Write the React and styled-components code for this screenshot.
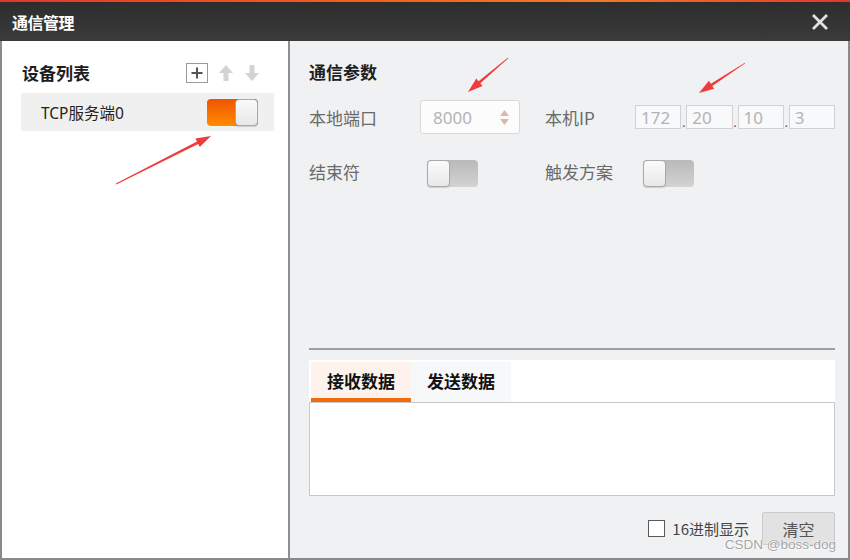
import React from "react";
import styled, { createGlobalStyle } from "styled-components";

const Global = createGlobalStyle`
  html, body { margin: 0; padding: 0; background: #fff; }
  body { font-family: "Noto Sans", "Noto Sans CJK SC", sans-serif; }
  * { box-sizing: border-box; }
`;

const Window = styled.div`
  position: relative;
  width: 850px;
  height: 560px;
  display: flex;
  flex-direction: column;
  background: #fff;
  overflow: hidden;
`;

const TitleBar = styled.div`
  height: 41px;
  flex-shrink: 0;
  display: flex;
  align-items: center;
  justify-content: space-between;
  padding: 2px 22px 0 12px;
  background:
    linear-gradient(90deg, #e2372c, #f2621c 45%, #f07a2a 70%, #e2372c) top / 100% 2px no-repeat,
    linear-gradient(#2c2c2c, #3b3b3b);
`;

const Title = styled.div`
  color: #fff;
  font-family: "Noto Sans CJK SC", sans-serif;
  font-weight: 700;
  font-size: 16px;
  letter-spacing: -0.5px;
`;

const CloseBtn = styled.svg`
  width: 16px;
  height: 16px;
  display: block;
`;

const Body = styled.div`
  flex: 1;
  min-height: 0;
  display: flex;
  border: 2px solid #8a8a8a;
  border-top: none;
`;

const LeftPanel = styled.div`
  width: 288px;
  flex-shrink: 0;
  background: #fff;
  border-right: 2px solid #8f8f8f;
  padding: 19px 14px 0 19px;
`;

const PanelHeader = styled.div`
  height: 26px;
  display: flex;
  align-items: center;
  justify-content: space-between;
  padding: 0 14px 0 1px;
`;

const SectionTitle = styled.div`
  font-family: "Noto Sans CJK SC", sans-serif;
  font-weight: 700;
  font-size: 17px;
  color: #1e1e1e;
  line-height: 24px;
  height: 24px;
`;

const HeaderIcons = styled.div`
  display: flex;
  align-items: center;
  gap: 10px;
`;

const IconSvg = styled.svg`
  display: block;
`;

const DeviceRow = styled.div`
  margin-top: 7px;
  height: 38px;
  background: #f0f0f0;
  display: flex;
  align-items: center;
  justify-content: space-between;
  padding: 0 16px 0 20px;
`;

const DeviceName = styled.span`
  font-size: 15.5px;
  color: #222;
  font-family: "Noto Sans", "Noto Sans CJK SC", sans-serif;
`;

const Toggle = styled.div`
  width: 51px;
  height: 27px;
  border-radius: 4px;
  display: flex;
  justify-content: ${(p) => (p.$on ? "flex-end" : "flex-start")};
  background: ${(p) =>
    p.$on
      ? "linear-gradient(#ef5400, #ff8c00)"
      : "linear-gradient(#b9b9b9, #d3d3d3)"};
  margin-left: ${(p) => p.$offset || 0}px;
`;

const Knob = styled.div`
  width: 23px;
  height: 27px;
  border-radius: 4px;
  background: linear-gradient(#fafafa, #e8e8e8);
  border: 1px solid #a9a9a9;
  box-shadow: 0 1px 1px rgba(0, 0, 0, 0.15);
`;

const RightPanel = styled.div`
  flex: 1;
  background: #f0f1f3;
  padding: 19px 13px 13px 19px;
  display: flex;
  flex-direction: column;
`;

const ParamGrid = styled.div`
  margin-top: 16px;
  display: grid;
  grid-template-columns: 111px 125px 90px 1fr;
  grid-auto-rows: 34px;
  row-gap: 22px;
  align-items: center;
`;

const Label = styled.span`
  font-family: "Noto Sans CJK SC", sans-serif;
  font-size: 17px;
  color: #6a6a6a;
  margin-top: ${(p) => (p.$raise ? "-4px" : "0")};
`;

const SpinBox = styled.div`
  width: 100px;
  height: 34px;
  background: #fcfcfc;
  border: 1px solid #d9d9d9;
  border-radius: 3px;
  display: flex;
  align-items: center;
  justify-content: space-between;
  padding: 0 10px 0 12px;
`;

const FieldText = styled.span`
  font-family: "Noto Sans", sans-serif;
  font-size: 17px;
  color: #b3b3b3;
`;

const SpinArrows = styled.div`
  display: flex;
  flex-direction: column;
  gap: 3px;
`;

const IpGroup = styled.div`
  display: flex;
  align-items: flex-end;
  height: 24px;
`;

const IpBox = styled.div`
  flex: 1;
  height: 24px;
  background: #f8f9fa;
  border: 1px solid #d2d2d2;
  display: flex;
  align-items: center;
  padding-left: 5px;
`;

const IpDot = styled.span`
  width: 5px;
  text-align: center;
  font-size: 13px;
  line-height: 14px;
  color: #555;
`;

const Spacer = styled.div`
  flex: 1;
`;

const Divider = styled.div`
  height: 2px;
  background: #a0a0a0;
  flex-shrink: 0;
`;

const TabBar = styled.div`
  margin-top: 10px;
  height: 42px;
  background: #fff;
  display: flex;
  align-items: flex-end;
  padding-left: 2px;
  flex-shrink: 0;
`;

const Tab = styled.div`
  width: 100px;
  height: 40px;
  display: flex;
  align-items: center;
  justify-content: center;
  font-family: "Noto Sans CJK SC", sans-serif;
  font-weight: 700;
  font-size: 17px;
  color: #111;
  background: ${(p) => (p.$active ? "#fdf3ec" : "#f7f8fa")};
  border-bottom: 4px solid ${(p) => (p.$active ? "#f26b0f" : "transparent")};
`;

const ContentBox = styled.div`
  height: 94px;
  background: #fff;
  border: 1px solid #c8c8c8;
  flex-shrink: 0;
`;

const Footer = styled.div`
  margin-top: 16px;
  height: 33px;
  display: flex;
  align-items: center;
  justify-content: flex-end;
  flex-shrink: 0;
`;

const CheckBox = styled.div`
  width: 17px;
  height: 17px;
  background: #fff;
  border: 1px solid #5a5a5a;
  margin-right: 7px;
`;

const CheckLabel = styled.span`
  font-family: "Noto Sans CJK SC", sans-serif;
  font-size: 15px;
  color: #444;
  margin-right: 13px;
`;

const Button = styled.div`
  width: 73px;
  height: 33px;
  background: #e2e2e2;
  border: 1px solid #c9c9c9;
  border-radius: 2px;
  display: flex;
  align-items: center;
  justify-content: center;
  font-family: "Noto Sans CJK SC", sans-serif;
  font-size: 16px;
  color: #555;
`;

const Watermark = styled.div`
  position: absolute;
  right: 14px;
  bottom: 8px;
  font-family: "Liberation Sans", sans-serif;
  font-size: 13.5px;
  color: #a5a5a5;
  text-shadow: 0 0 2px #fff, 0 0 2px #fff;
  pointer-events: none;
`;

const Overlay = styled.svg`
  position: absolute;
  left: 0;
  top: 0;
  width: 850px;
  height: 560px;
  pointer-events: none;
`;

function arrowPoints(tx, ty, hx, hy) {
  const dx = hx - tx;
  const dy = hy - ty;
  const len = Math.hypot(dx, dy);
  const ux = dx / len;
  const uy = dy / len;
  const px = -uy;
  const py = ux;
  const headLen = 15;
  const bx = hx - ux * headLen;
  const by = hy - uy * headLen;
  const pts = [
    [tx + px * 0.4, ty + py * 0.4],
    [bx + px * 1.3, by + py * 1.3],
    [bx + px * 4.8, by + py * 4.8],
    [hx, hy],
    [bx - px * 4.8, by - py * 4.8],
    [bx - px * 1.3, by - py * 1.3],
    [tx - px * 0.4, ty - py * 0.4],
  ];
  return pts.map((p) => p.map((v) => v.toFixed(1)).join(",")).join(" ");
}

const arrows = [
  [116, 184, 211, 136],
  [508, 58, 468, 92],
  [745, 63, 699, 93],
];

function UpArrow() {
  return (
    <IconSvg width="16" height="18" viewBox="0 0 16 18">
      <path d="M8 1 L15 9 L10.5 9 L10.5 17 L5.5 17 L5.5 9 L1 9 Z" fill="#d3d3d3" />
    </IconSvg>
  );
}

function DownArrow() {
  return (
    <IconSvg width="16" height="18" viewBox="0 0 16 18">
      <path d="M8 17 L15 9 L10.5 9 L10.5 1 L5.5 1 L5.5 9 L1 9 Z" fill="#d3d3d3" />
    </IconSvg>
  );
}

function PlusBox() {
  return (
    <IconSvg width="22" height="20" viewBox="0 0 22 20">
      <rect x="0.5" y="0.5" width="21" height="19" fill="#fff" stroke="#9a9a9a" />
      <path d="M11 4.5 V15.5 M5.5 10 H16.5" stroke="#555" strokeWidth="2" />
    </IconSvg>
  );
}

export default function App() {
  return (
    <>
      <Global />
      <Window>
        <TitleBar>
          <Title>通信管理</Title>
          <CloseBtn viewBox="0 0 16 16">
            <path d="M2 2 L14 14 M14 2 L2 14" stroke="#e2e2e2" strokeWidth="2.8" strokeLinecap="square" />
          </CloseBtn>
        </TitleBar>
        <Body>
          <LeftPanel>
            <PanelHeader>
              <SectionTitle>设备列表</SectionTitle>
              <HeaderIcons>
                <PlusBox />
                <UpArrow />
                <DownArrow />
              </HeaderIcons>
            </PanelHeader>
            <DeviceRow>
              <DeviceName>TCP服务端0</DeviceName>
              <Toggle $on>
                <Knob />
              </Toggle>
            </DeviceRow>
          </LeftPanel>
          <RightPanel>
            <SectionTitle>通信参数</SectionTitle>
            <ParamGrid>
              <Label>本地端口</Label>
              <SpinBox>
                <FieldText>8000</FieldText>
                <SpinArrows>
                  <IconSvg width="9" height="6" viewBox="0 0 9 6">
                    <path d="M4.5 0 L9 6 L0 6 Z" fill="#dbb9a4" />
                  </IconSvg>
                  <IconSvg width="9" height="6" viewBox="0 0 9 6">
                    <path d="M4.5 6 L9 0 L0 0 Z" fill="#dbb9a4" />
                  </IconSvg>
                </SpinArrows>
              </SpinBox>
              <Label>本机IP</Label>
              <IpGroup>
                <IpBox><FieldText>172</FieldText></IpBox>
                <IpDot>.</IpDot>
                <IpBox><FieldText>20</FieldText></IpBox>
                <IpDot>.</IpDot>
                <IpBox><FieldText>10</FieldText></IpBox>
                <IpDot>.</IpDot>
                <IpBox><FieldText>3</FieldText></IpBox>
              </IpGroup>
              <Label $raise>结束符</Label>
              <Toggle $offset={7}>
                <Knob />
              </Toggle>
              <Label $raise>触发方案</Label>
              <Toggle $offset={8}>
                <Knob />
              </Toggle>
            </ParamGrid>
            <Spacer />
            <Divider />
            <TabBar>
              <Tab $active>接收数据</Tab>
              <Tab>发送数据</Tab>
            </TabBar>
            <ContentBox />
            <Footer>
              <CheckBox />
              <CheckLabel>16进制显示</CheckLabel>
              <Button>清空</Button>
            </Footer>
          </RightPanel>
        </Body>
        <Watermark>CSDN @boss-dog</Watermark>
        <Overlay viewBox="0 0 850 560">
          {arrows.map((a, i) => (
            <polygon key={i} points={arrowPoints(...a)} fill="#ef3b3b" />
          ))}
        </Overlay>
      </Window>
    </>
  );
}
